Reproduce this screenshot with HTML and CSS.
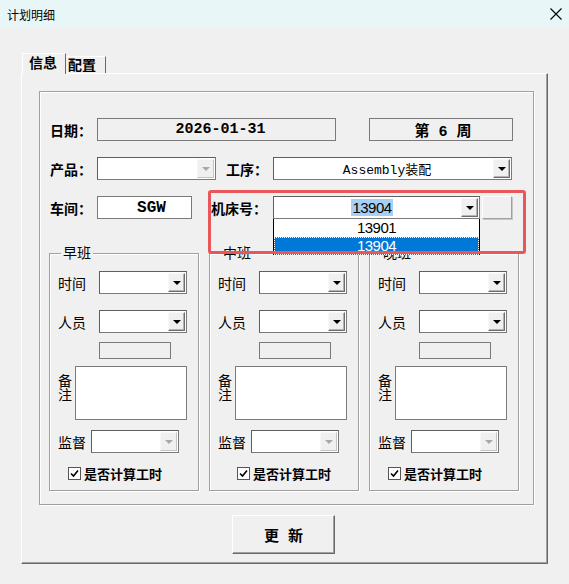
FILE: index.html
```html
<!DOCTYPE html>
<html lang="zh-CN">
<head>
    <meta charset="UTF-8">
    <title>计划明细</title>
    <link rel="stylesheet" href="styles.css">
</head>
<body>
    <div class="titlebar">
        <span class="title">计划明细</span>
        <svg class="close" width="12" height="12" viewBox="0 0 12 12">
            <path d="M0.5 0.5 L11.5 11.5 M11.5 0.5 L0.5 11.5" stroke="#000" stroke-width="1.1" fill="none"/>
        </svg>
    </div>

    <div class="tabs">
        <div class="tab tab-active">信息</div>
        <div class="tab tab-plain">配置</div>
    </div>

    <div class="tabpanel">
        <div class="frame">
            <div class="row">
                <span class="lbl">日期：</span>
                <div class="field field-date">2026-01-31</div>
                <div class="field field-week">第 6 周</div>
            </div>

            <div class="row">
                <span class="lbl">产品：</span>
                <div class="combo combo-product"><span class="combo-text"></span><span class="arrow arrow-off"></span></div>
                <span class="lbl lbl-step">工序：</span>
                <div class="combo combo-step"><span class="combo-text mono">Assembly装配</span><span class="arrow"></span></div>
            </div>

            <div class="row">
                <span class="lbl">车间：</span>
                <div class="field field-shop">SGW</div>
                <span class="lbl lbl-machine">机床号：</span>
                <div class="combo combo-machine"><span class="combo-text"><span class="sel-text">13904</span></span><span class="arrow"></span></div>
                <div class="mini-btn"></div>
            </div>

            <div class="groups">
                <div class="group">
                    <span class="legend">早班</span>
                    <div class="g-row"><span class="g-lbl">时间</span><div class="combo combo-s"><span class="combo-text"></span><span class="arrow"></span></div></div>
                    <div class="g-row"><span class="g-lbl">人员</span><div class="combo combo-s"><span class="combo-text"></span><span class="arrow"></span></div></div>
                    <div class="small-box"></div>
                    <div class="note-row"><span class="v-lbl">备注</span><div class="note"></div></div>
                    <div class="g-row"><span class="g-lbl g-lbl-short">监督</span><div class="combo combo-s"><span class="combo-text"></span><span class="arrow arrow-off"></span></div></div>
                    <div class="check-row"><span class="checkbox"><svg width="9" height="9" viewBox="0 0 9 9"><path d="M1 4.5 L3.5 7 L8 1.5" stroke="#000" stroke-width="1.6" fill="none"/></svg></span><span class="check-lbl">是否计算工时</span></div>
                </div>

                <div class="group">
                    <span class="legend">中班</span>
                    <div class="g-row"><span class="g-lbl">时间</span><div class="combo combo-s"><span class="combo-text"></span><span class="arrow"></span></div></div>
                    <div class="g-row"><span class="g-lbl">人员</span><div class="combo combo-s"><span class="combo-text"></span><span class="arrow"></span></div></div>
                    <div class="small-box"></div>
                    <div class="note-row"><span class="v-lbl">备注</span><div class="note"></div></div>
                    <div class="g-row"><span class="g-lbl g-lbl-short">监督</span><div class="combo combo-s"><span class="combo-text"></span><span class="arrow arrow-off"></span></div></div>
                    <div class="check-row check-row-mid"><span class="checkbox"><svg width="9" height="9" viewBox="0 0 9 9"><path d="M1 4.5 L3.5 7 L8 1.5" stroke="#000" stroke-width="1.6" fill="none"/></svg></span><span class="check-lbl">是否计算工时</span></div>
                </div>

                <div class="group">
                    <span class="legend">晚班</span>
                    <div class="g-row"><span class="g-lbl">时间</span><div class="combo combo-s"><span class="combo-text"></span><span class="arrow"></span></div></div>
                    <div class="g-row"><span class="g-lbl">人员</span><div class="combo combo-s"><span class="combo-text"></span><span class="arrow"></span></div></div>
                    <div class="small-box"></div>
                    <div class="note-row"><span class="v-lbl">备注</span><div class="note"></div></div>
                    <div class="g-row"><span class="g-lbl g-lbl-short">监督</span><div class="combo combo-s"><span class="combo-text"></span><span class="arrow arrow-off"></span></div></div>
                    <div class="check-row"><span class="checkbox"><svg width="9" height="9" viewBox="0 0 9 9"><path d="M1 4.5 L3.5 7 L8 1.5" stroke="#000" stroke-width="1.6" fill="none"/></svg></span><span class="check-lbl">是否计算工时</span></div>
                </div>
            </div>
        </div>

        <div class="btn"><span>更</span><span>新</span></div>
    </div>

    <!-- lista aberta do combo 机床号 -->
    <div class="droplist">
        <div class="drop-item">13901</div>
        <div class="drop-item drop-sel">13904</div>
    </div>

    <div class="highlight"></div>
</body>
</html>
```

FILE: styles.css
```css
* {
    margin: 0;
    padding: 0;
    box-sizing: border-box;
}

body {
    width: 569px;
    height: 584px;
    background: #f0f0f0;
    color: #000;
    font-family: "Noto Sans CJK SC", sans-serif;
    position: relative;
    overflow: hidden;
}

.titlebar {
    height: 28px;
    background: #e8f6f8;
    display: flex;
    align-items: center;
    justify-content: space-between;
    padding: 0 7px 0 7px;
}

.title {
    font-size: 12px;
}

.close {
    display: block;
}

/* abas */
.tabs {
    display: flex;
    align-items: flex-end;
    height: 20px;
    margin-top: 25px;
    padding-left: 22px;
    position: relative;
    z-index: 1;
}

.tab {
    font-size: 14px;
    font-weight: bold;
    background: #f0f0f0;
    border-top: 1px solid #fff;
    border-right: 1px solid #696969;
}

.tab-active {
    width: 44px;
    height: 21px;
    margin-bottom: -1px;
    border-left: 1px solid #fff;
    padding: 2px 0 0 6px;
    line-height: 12px;
}

.tab-plain {
    width: 40px;
    height: 17px;
    padding-left: 2px;
    line-height: 12px;
    padding-top: 1px;
}

.tabpanel {
    margin-left: 21px;
    width: 527px;
    height: 491px;
    border-left: 1px solid #fff;
    border-top: 1px solid #fff;
    border-right: 1px solid #696969;
    border-bottom: 1px solid #696969;
    box-shadow: inset -1px -1px 0 #a0a0a0;
    padding: 17px 0 0 17px;
}

.frame {
    width: 495px;
    height: 414px;
    border: 1px solid #a0a0a0;
    box-shadow: inset 1px 1px 0 #fff, 1px 1px 0 #fff;
    padding: 26px 0 0 10px;
}

.row {
    display: flex;
    align-items: center;
    height: 23px;
}

.row + .row {
    margin-top: 16px;
}

.lbl {
    width: 47px;
    font-size: 14px;
    font-weight: bold;
    white-space: nowrap;
}

.lbl-step {
    margin-left: 10px;
}

.lbl-machine {
    width: 62px;
    margin-left: 19px;
}

.field {
    height: 23px;
    border: 1px solid #7a7a7a;
    display: flex;
    align-items: center;
    justify-content: center;
    font-weight: bold;
}

.field-date {
    width: 239px;
    font-family: "Liberation Mono", monospace;
    font-size: 15px;
    padding-left: 8px;
}

.field-week {
    width: 144px;
    margin-left: 33px;
    font-size: 15px;
    font-family: "Liberation Mono", "Noto Sans CJK SC", monospace;
    padding-left: 4px;
}

.field-shop {
    width: 95px;
    background: #fff;
    font-family: "Liberation Mono", monospace;
    font-size: 16px;
    padding-left: 14px;
}

/* combos */
.combo {
    display: flex;
    height: 23px;
    background: #fff;
    border: 1px solid #7a7a7a;
    border-top-color: #5f5f5f;
    border-left-color: #5f5f5f;
    padding: 1px;
}

.combo-text {
    flex: 1;
    display: flex;
    align-items: center;
    justify-content: center;
    font-size: 14px;
}

.mono {
    font-family: "Liberation Mono", "Noto Sans CJK SC", monospace;
    font-size: 13px;
    padding-left: 6px;
}

.combo-product {
    width: 119px;
}

.combo-step {
    width: 239px;
}

.combo-machine {
    width: 207px;
}

.combo-machine .combo-text {
    padding-left: 8px;
}

.sel-text {
    background: #a8d0f4;
    font-family: "Liberation Sans", sans-serif;
    font-size: 15px;
    letter-spacing: -0.5px;
    line-height: 17px;
    padding: 0 1px;
}

.arrow {
    width: 17px;
    background: #f0f0f0;
    border-top: 1px solid #f8f8f8;
    border-left: 1px solid #f8f8f8;
    border-right: 1px solid #6d6d6d;
    border-bottom: 1px solid #6d6d6d;
    box-shadow: inset -1px -1px 0 #b4b4b4;
    display: flex;
    align-items: center;
    justify-content: center;
}

.arrow::after {
    content: "";
    border-left: 4px solid transparent;
    border-right: 4px solid transparent;
    border-top: 4px solid #000;
    margin-top: 1px;
}

.arrow-off {
    border-right-color: #c4c4c4;
    border-bottom-color: #c4c4c4;
    box-shadow: none;
}

.arrow-off::after {
    border-top-color: #a8a8a8;
}

.mini-btn {
    width: 30px;
    height: 23px;
    margin-left: 2px;
    border: 1px solid #a0a0a0;
    border-top-color: #fff;
    border-left-color: #fff;
    box-shadow: 1px 1px 0 #c8c8c8;
}

/* turnos */
.groups {
    display: flex;
    gap: 10px;
    margin-top: 34px;
    margin-left: -1px;
}

.group {
    position: relative;
    width: 150px;
    height: 238px;
    border: 1px solid #a0a0a0;
    box-shadow: inset 1px 1px 0 #fff, 1px 1px 0 #fff;
    padding: 17px 0 0 8px;
}

.legend {
    position: absolute;
    top: -10px;
    left: 11px;
    font-size: 14px;
    line-height: 16px;
    background: #f0f0f0;
    padding: 0 2px;
}

.g-row {
    display: flex;
    align-items: center;
    height: 23px;
}

.g-row + .g-row {
    margin-top: 16px;
}

.g-lbl {
    width: 41px;
    font-size: 14px;
}

.g-lbl-short {
    width: 33px;
}

.combo-s {
    width: 88px;
}

.small-box {
    width: 72px;
    height: 17px;
    margin: 9px 0 0 41px;
    border: 1px solid #7a7a7a;
}

.note-row {
    display: flex;
    margin-top: 7px;
    margin-bottom: 10px;
}

.v-lbl {
    writing-mode: vertical-rl;
    width: 17px;
    height: 54px;
    font-size: 14px;
    line-height: 14px;
    padding-top: 8px;
    padding-right: 3px;
}

.note {
    width: 112px;
    height: 54px;
    background: #fff;
    border: 1px solid #7a7a7a;
}

.note-row + .g-row {
    margin-top: 0;
}

.check-row {
    display: flex;
    align-items: center;
    margin: 14px 0 0 10px;
    height: 13px;
}

.check-row-mid {
    margin-left: 19px;
}

.checkbox {
    width: 13px;
    height: 13px;
    background: #fff;
    border: 1px solid #555;
    display: flex;
    align-items: center;
    justify-content: center;
}

.checkbox svg {
    display: block;
}

.check-lbl {
    margin-left: 3px;
    font-size: 13px;
    font-weight: bold;
    white-space: nowrap;
}

.btn {
    width: 103px;
    height: 39px;
    margin: 10px 0 0 193px;
    border: 1px solid #696969;
    border-top-color: #fff;
    border-left-color: #fff;
    box-shadow: inset -1px -1px 0 #a0a0a0;
    display: flex;
    align-items: center;
    justify-content: center;
    gap: 9px;
    font-size: 15px;
    font-weight: bold;
}

/* sobreposições */
.droplist {
    position: absolute;
    left: 273px;
    top: 219px;
    width: 207px;
    height: 36px;
    background: #fff;
    border: 1px solid #000;
    border-top: none;
}

.drop-item {
    height: 18px;
    line-height: 18px;
    text-align: center;
    font-family: "Liberation Sans", sans-serif;
    font-size: 15px;
    letter-spacing: -0.5px;
}

.drop-sel {
    background: #0078d7;
    color: #fff;
    outline: 1px dotted #fff;
    outline-offset: -1px;
}

.highlight {
    position: absolute;
    left: 208px;
    top: 190px;
    width: 318px;
    height: 64px;
    border: 3px solid #e9575a;
    border-radius: 3px;
}
```
